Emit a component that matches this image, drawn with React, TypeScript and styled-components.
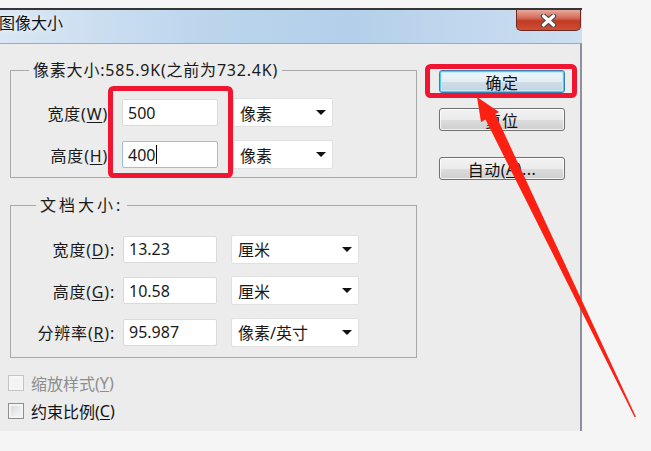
import React from "react";
import styled, { createGlobalStyle } from "styled-components";

const GlobalStyle = createGlobalStyle`
  html, body {
    margin: 0;
    padding: 0;
    background: #f5f5f5;
  }
  body {
    font-family: "Noto Sans", "Noto Sans CJK SC", sans-serif;
    color: #1a1a1a;
  }
`;

const Page = styled.div`
  position: relative;
  width: 651px;
  height: 451px;
  overflow: hidden;
  box-sizing: border-box;
  padding-top: 8px;
  background: #f5f5f5;
`;

const Window = styled.div`
  width: 582px;
  display: flex;
  flex-direction: column;
`;

const TitleBar = styled.div`
  height: 33px;
  border-top: 2px solid #363636;
  background: linear-gradient(90deg, #dae7f4 0%, #bcd5ed 35%, #b4cfea 60%, #cddff1 100%);
  display: flex;
  justify-content: space-between;
  align-items: flex-start;
`;

const Title = styled.div`
  margin-left: -1px;
  font-size: 16px;
  line-height: 26px;
  color: #111;
  text-shadow: 0 0 6px rgba(255, 255, 255, 0.9);
`;

const CloseButton = styled.div`
  width: 65px;
  height: 21px;
  margin-right: 1px;
  box-sizing: border-box;
  border: 1px solid #6e2a20;
  border-top: none;
  border-radius: 0 0 5px 5px;
  background: linear-gradient(180deg, #e7aa9e 0%, #d46b58 40%, #c23a22 55%, #cf4f36 100%);
  display: flex;
  align-items: center;
  justify-content: center;
`;

const Client = styled.div`
  height: 388px;
  box-sizing: border-box;
  border-top: 1px solid #a3a9b0;
  border-right: 2px solid #8b929a;
  background: #ececec;
  overflow: hidden;
  display: flex;
`;

const LeftCol = styled.div`
  width: 417px;
  box-sizing: border-box;
  padding-left: 8px;
  flex-shrink: 0;
`;

const Group = styled.fieldset<{ $top: number; $pt: number; $pb: number }>`
  margin: ${(p) => p.$top}px 0 0 2px;
  width: 407px;
  box-sizing: border-box;
  padding: ${(p) => p.$pt}px 0 ${(p) => p.$pb}px 0;
  border: 1px solid #a9a9a9;
  min-inline-size: 0;
`;

const Legend = styled.legend<{ $ml: number; $ls: number }>`
  margin-left: ${(p) => p.$ml}px;
  padding: 0 4px;
  font-size: 16px;
  line-height: 20px;
  letter-spacing: ${(p) => p.$ls}px;
  color: #1a1a1a;
`;

const Rows = styled.div<{ $gap: number }>`
  display: flex;
  flex-direction: column;
  gap: ${(p) => p.$gap}px;
`;

const Row = styled.div<{ $h: number }>`
  display: flex;
  align-items: center;
  height: ${(p) => p.$h}px;
`;

const Label = styled.div<{ $w: number }>`
  width: ${(p) => p.$w}px;
  flex-shrink: 0;
  text-align: right;
  font-size: 16px;
  letter-spacing: 0.8px;
  white-space: nowrap;
`;

const U = styled.span`
  text-decoration: underline;
  text-underline-offset: 2px;
`;

const TextBox = styled.div<{ $ml: number; $w: number; $focus?: boolean }>`
  margin-left: ${(p) => p.$ml}px;
  width: ${(p) => p.$w}px;
  height: 27px;
  box-sizing: border-box;
  border: 1px solid ${(p) => (p.$focus ? "#98c0e4" : "#dadada")};
  border-radius: 2px;
  background: #fff;
  padding-left: 5px;
  display: flex;
  align-items: center;
  font-size: 16px;
  color: #1a1a1a;
`;

const Caret = styled.span`
  display: inline-block;
  width: 0;
  height: 19px;
  margin-left: 1px;
  border-left: 1px solid #000;
`;

const Select = styled.div<{ $ml: number; $w: number }>`
  margin-left: ${(p) => p.$ml}px;
  width: ${(p) => p.$w}px;
  height: 29px;
  box-sizing: border-box;
  border: 1px solid #e0e0e0;
  border-radius: 2px;
  background: #fff;
  padding: 0 6px 0 6px;
  display: flex;
  align-items: center;
  justify-content: space-between;
  font-size: 16px;
`;

const DropArrow = styled.span`
  width: 0;
  height: 0;
  border-left: 5px solid transparent;
  border-right: 5px solid transparent;
  border-top: 5px solid #111;
`;

const Checks = styled.div`
  margin-top: 15px;
  display: flex;
  flex-direction: column;
  gap: 8px;
`;

const CheckRow = styled.div<{ $disabled?: boolean }>`
  display: flex;
  align-items: center;
  height: 20px;
  font-size: 16px;
  white-space: nowrap;
  color: ${(p) => (p.$disabled ? "#8d8d8d" : "#111")};
`;

const Box = styled.span<{ $disabled?: boolean }>`
  width: 16px;
  height: 16px;
  margin-right: 7px;
  box-sizing: border-box;
  flex-shrink: 0;
  border: 1px solid ${(p) => (p.$disabled ? "#c4c4c4" : "#8e8f8f")};
  background: ${(p) =>
    p.$disabled
      ? "#f3f3f3"
      : "linear-gradient(135deg, #cfd3d8 0%, #eceef0 60%, #f7f7f7 100%)"};
  box-shadow: inset 0 0 0 2px ${(p) => (p.$disabled ? "#f6f6f6" : "#f4f4f4")};
`;

const RightCol = styled.div`
  margin-left: 22px;
  padding-top: 26px;
  display: flex;
  flex-direction: column;
`;

const Button = styled.div<{ $default?: boolean; $mt: number }>`
  margin-top: ${(p) => p.$mt}px;
  width: 126px;
  height: 23px;
  box-sizing: border-box;
  border: 1px solid ${(p) => (p.$default ? "#3c7fb1" : "#707070")};
  border-radius: 3px;
  background: ${(p) =>
    p.$default
      ? "linear-gradient(180deg, #eef6fb 0%, #e2edf4 50%, #cfdde8 51%, #c3d3e0 100%)"
      : "linear-gradient(180deg, #f2f2f2 0%, #ebebeb 50%, #dddddd 51%, #cfcfcf 100%)"};
  box-shadow: ${(p) =>
    p.$default
      ? "inset 0 0 0 1px #4fcaf2, inset 0 0 0 2px #c4ecfa"
      : "inset 0 0 0 1px rgba(255,255,255,0.75)"};
  display: flex;
  align-items: center;
  justify-content: center;
  font-size: 16px;
  letter-spacing: 0.5px;
  color: #111;
  white-space: nowrap;
`;

const Annotation = styled.svg`
  position: absolute;
  left: 0;
  top: 0;
  pointer-events: none;
`;

export default function App() {
  return (
    <Page>
      <GlobalStyle />
      <Window>
        <TitleBar>
          <Title>图像大小</Title>
          <CloseButton>
            <svg width="17" height="13" viewBox="0 0 17 13">
              <path d="M3.5 2 L13.5 11 M13.5 2 L3.5 11" stroke="#4a4a4a" strokeWidth="5.5" strokeLinecap="round" />
              <path d="M3.5 2 L13.5 11 M13.5 2 L3.5 11" stroke="#fff" strokeWidth="3.2" strokeLinecap="round" />
            </svg>
          </CloseButton>
        </TitleBar>
        <Client>
          <LeftCol>
            <Group $top={16} $pt={18} $pb={8}>
              <Legend $ml={18} $ls={0.8}>像素大小:585.9K(之前为732.4K)</Legend>
              <Rows $gap={13}>
                <Row $h={29}>
                  <Label $w={97}>
                    宽度(<U>W</U>)
                  </Label>
                  <TextBox $ml={14} $w={96}>500</TextBox>
                  <Select $ml={15} $w={100}>
                    像素
                    <DropArrow />
                  </Select>
                </Row>
                <Row $h={29}>
                  <Label $w={97}>
                    高度(<U>H</U>)
                  </Label>
                  <TextBox $ml={14} $w={96} $focus>
                    400
                    <Caret />
                  </TextBox>
                  <Select $ml={15} $w={100}>
                    像素
                    <DropArrow />
                  </Select>
                </Row>
              </Rows>
            </Group>
            <Group $top={17} $pt={20} $pb={11}>
              <Legend $ml={25} $ls={3}>
                文档大小:
              </Legend>
              <Rows $gap={13.5}>
                <Row $h={28}>
                  <Label $w={104}>
                    宽度(<U>D</U>):
                  </Label>
                  <TextBox $ml={8} $w={94}>13.23</TextBox>
                  <Select $ml={14} $w={128}>
                    厘米
                    <DropArrow />
                  </Select>
                </Row>
                <Row $h={28}>
                  <Label $w={104}>
                    高度(<U>G</U>):
                  </Label>
                  <TextBox $ml={8} $w={94}>10.58</TextBox>
                  <Select $ml={14} $w={128}>
                    厘米
                    <DropArrow />
                  </Select>
                </Row>
                <Row $h={28}>
                  <Label $w={104}>
                    分辨率(<U>R</U>):
                  </Label>
                  <TextBox $ml={8} $w={94}>95.987</TextBox>
                  <Select $ml={14} $w={128}>
                    像素/英寸
                    <DropArrow />
                  </Select>
                </Row>
              </Rows>
            </Group>
            <Checks>
              <CheckRow $disabled>
                <Box $disabled />
                缩放样式(<U>Y</U>)
              </CheckRow>
              <CheckRow>
                <Box />
                约束比例(<U>C</U>)
              </CheckRow>
              <CheckRow>
                <Box />
                重定图像像素(<U>I</U>):
              </CheckRow>
            </Checks>
          </LeftCol>
          <RightCol>
            <Button $default $mt={0}>确定</Button>
            <Button $mt={15}>复位</Button>
            <Button $mt={26}>
              自动(<U>A</U>)...
            </Button>
          </RightCol>
        </Client>
      </Window>
      <Annotation width="651" height="451" viewBox="0 0 651 451">
        <rect x="110.5" y="88.5" width="120" height="87" rx="3" fill="none" stroke="#f01530" strokeWidth="5" />
        <rect x="427.5" y="66.5" width="147" height="29" rx="3" fill="none" stroke="#f01530" strokeWidth="5" />
        <polygon points="485,118.5 495,113.5 636,417 634.5,417" fill="#fb2012" />
        <polygon points="477,97 499,112 481,122" fill="#fb2012" />
      </Annotation>
    </Page>
  );
}
